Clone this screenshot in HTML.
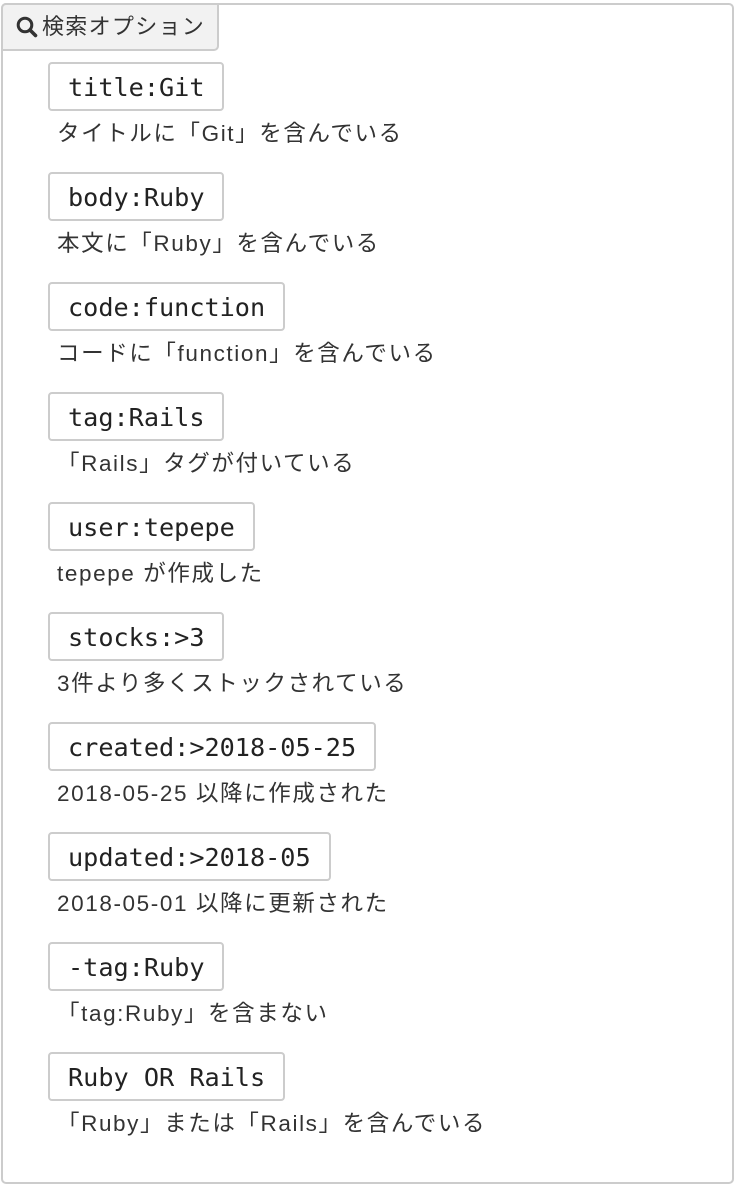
<!DOCTYPE html>
<html><head><meta charset="utf-8"><style>
html,body{margin:0;padding:0;background:#fff;width:734px;height:1184px;overflow:hidden}
.box{position:absolute;left:1px;top:3px;width:729px;height:1177px;border:2px solid #ccc;border-radius:5px;box-sizing:content-box}
.tab{position:absolute;left:1px;top:3px;width:214px;height:44px;background:#f2f2f2;border:2px solid #ccc;border-radius:5px 0 5px 0;font-family:"Liberation Sans","Noto Sans CJK JP",sans-serif;font-size:22px;letter-spacing:1.3px;color:#333;line-height:44px}
.tab span{position:absolute;left:39px;top:0px}
.code{position:absolute;left:48px;height:45px;border:2px solid #ccc;border-radius:4px;font-family:"DejaVu Sans Mono","Liberation Mono",monospace;font-size:25.2px;color:#222;line-height:47px;padding:0 18px;white-space:pre}
.desc{position:absolute;left:57px;font-family:"Liberation Sans","Noto Sans CJK JP",sans-serif;font-size:22.5px;letter-spacing:1.6px;color:#333;white-space:pre;line-height:24px}
</style></head><body>
<div class="box"></div>
<div class="tab"><svg style="position:absolute;left:12px;top:10px" width="24" height="24" viewBox="0 0 24 24"><circle cx="10" cy="10" r="6.8" fill="none" stroke="#333" stroke-width="3"/><line x1="15" y1="15" x2="20.5" y2="20.5" stroke="#333" stroke-width="3.6" stroke-linecap="round"/></svg><span>検索オプション</span></div>

<div class="code" style="top:62px">title:Git</div><div class="desc" style="top:122px">タイトルに「Git」を含んでいる</div>
<div class="code" style="top:172px">body:Ruby</div><div class="desc" style="top:232px">本文に「Ruby」を含んでいる</div>
<div class="code" style="top:282px">code:function</div><div class="desc" style="top:342px">コードに「function」を含んでいる</div>
<div class="code" style="top:392px">tag:Rails</div><div class="desc" style="top:452px">「Rails」タグが付いている</div>
<div class="code" style="top:502px">user:tepepe</div><div class="desc" style="top:562px">tepepe が作成した</div>
<div class="code" style="top:612px">stocks:&gt;3</div><div class="desc" style="top:672px">3件より多くストックされている</div>
<div class="code" style="top:722px">created:&gt;2018-05-25</div><div class="desc" style="top:782px">2018-05-25 以降に作成された</div>
<div class="code" style="top:832px">updated:&gt;2018-05</div><div class="desc" style="top:892px">2018-05-01 以降に更新された</div>
<div class="code" style="top:942px">-tag:Ruby</div><div class="desc" style="top:1002px">「tag:Ruby」を含まない</div>
<div class="code" style="top:1052px">Ruby OR Rails</div><div class="desc" style="top:1112px">「Ruby」または「Rails」を含んでいる</div>
</body></html>
